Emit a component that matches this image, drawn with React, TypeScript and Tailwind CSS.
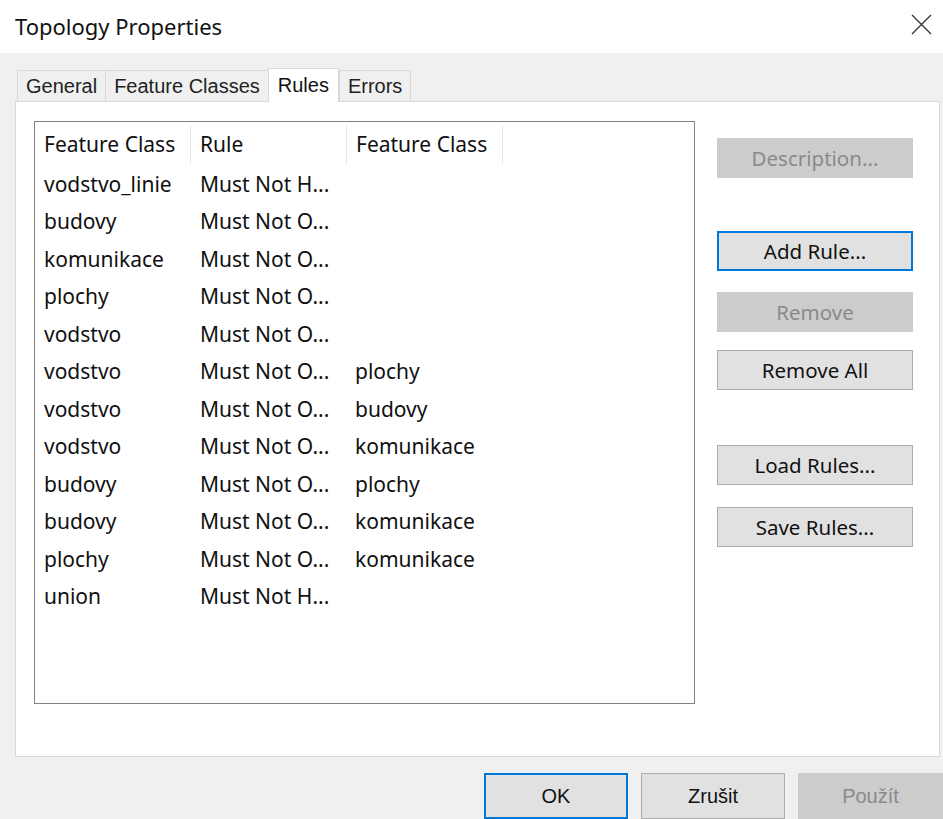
import React from "react";

const rows: [string, string, string][] = [
  ["vodstvo_linie", "Must Not H...", ""],
  ["budovy", "Must Not O...", ""],
  ["komunikace", "Must Not O...", ""],
  ["plochy", "Must Not O...", ""],
  ["vodstvo", "Must Not O...", ""],
  ["vodstvo", "Must Not O...", "plochy"],
  ["vodstvo", "Must Not O...", "budovy"],
  ["vodstvo", "Must Not O...", "komunikace"],
  ["budovy", "Must Not O...", "plochy"],
  ["budovy", "Must Not O...", "komunikace"],
  ["plochy", "Must Not O...", "komunikace"],
  ["union", "Must Not H...", ""],
];

const segoe = { fontFamily: '"Noto Sans", "Open Sans", sans-serif' };
const sans = { fontFamily: '"Liberation Sans", Arial, sans-serif' };

function SideButton({
  label,
  kind = "normal",
  className = "",
}: {
  label: string;
  kind?: "normal" | "default" | "disabled";
  className?: string;
}) {
  const look =
    kind === "disabled"
      ? "bg-[#cccccc] border border-[#cccccc] text-[#8a8a8a]"
      : kind === "default"
      ? "bg-[#e1e1e1] border-2 border-[#0078d7] text-[#111]"
      : "bg-[#e1e1e1] border border-[#adadad] text-[#111]";
  return (
    <div
      className={`h-[40px] w-[196px] flex items-center justify-center text-[20.5px] ${look} ${className}`}
      style={segoe}
    >
      {label}
    </div>
  );
}

function Tab({ label, active = false }: { label: string; active?: boolean }) {
  return active ? (
    <div className="h-[34px] px-[9px] flex items-center bg-white border border-b-0 border-[#d9d9d9] -mb-px relative z-10 text-[20px] text-[#111]">
      {label}
    </div>
  ) : (
    <div className="h-[31px] px-[8px] flex items-center bg-[#f0f0f0] border border-[#d9d9d9] border-b-0 -mr-px text-[20px] text-[#222]">
      {label}
    </div>
  );
}

export default function App() {
  return (
    <div className="w-[943px] h-[819px] bg-[#f0f0f0] overflow-hidden flex flex-col">
      {/* title bar */}
      <div className="h-[53px] bg-white flex items-center justify-between pl-[15px] pr-[11px] shrink-0">
        <span className="text-[22px] text-[#111]" style={segoe}>
          Topology Properties
        </span>
        <svg width="21" height="21" viewBox="0 0 21 21" className="-mt-[5px]">
          <path d="M1 1 L20 20 M20 1 L1 20" stroke="#333" strokeWidth="1.3" fill="none" />
        </svg>
      </div>

      {/* tabs */}
      <div className="flex items-end pl-[17px] mt-[14px] h-[34px]" style={sans}>
        <Tab label="General" />
        <Tab label="Feature Classes" />
        <Tab label="Rules" active />
        <Tab label="Errors" />
      </div>

      {/* tab page */}
      <div className="ml-[15px] w-[925px] h-[658px] bg-white border border-[#d9d9d9] flex pl-[18px] pt-[19px]">
        {/* rule list */}
        <div className="w-[661px] h-[583px] border border-[#828282] pt-[2px] text-[21px] text-[#111]" style={segoe}>
          <div className="flex h-[42px] items-center">
            {["Feature Class", "Rule", "Feature Class"].map((h, i) => (
              <div
                key={i}
                className="w-[156px] h-[38px] flex items-center pl-[9px] border-r border-[#e5e5e5] whitespace-nowrap"
              >
                {h}
              </div>
            ))}
          </div>
          {rows.map((r, i) => (
            <div key={i} className="flex h-[37.5px] items-center">
              <div className="w-[156px] pl-[9px] whitespace-nowrap">{r[0]}</div>
              <div className="w-[156px] pl-[9px] whitespace-nowrap">{r[1]}</div>
              <div className="w-[156px] pl-[8px] whitespace-nowrap">{r[2]}</div>
            </div>
          ))}
        </div>

        {/* action buttons */}
        <div className="ml-[22px] pt-[17px] flex flex-col">
          <SideButton label="Description..." kind="disabled" />
          <SideButton label="Add Rule..." kind="default" className="mt-[53px]" />
          <SideButton label="Remove" kind="disabled" className="mt-[21px]" />
          <SideButton label="Remove All" className="mt-[18px]" />
          <SideButton label="Load Rules..." className="mt-[55px]" />
          <SideButton label="Save Rules..." className="mt-[22px]" />
        </div>
      </div>

      {/* dialog buttons */}
      <div className="flex pl-[484px] gap-[13px] mt-[16px]" style={sans}>
        <div className="w-[144px] h-[46px] shrink-0 bg-[#e1e1e1] border-2 border-[#0078d7] flex items-center justify-center text-[20px] text-[#111]">
          OK
        </div>
        <div className="w-[144px] h-[46px] shrink-0 bg-[#e1e1e1] border border-[#adadad] flex items-center justify-center text-[20px] text-[#111]">
          Zrušit
        </div>
        <div className="w-[145px] h-[46px] shrink-0 bg-[#cccccc] border border-[#cccccc] flex items-center justify-center text-[20px] text-[#8a8a8a]">
          Použít
        </div>
      </div>
    </div>
  );
}
